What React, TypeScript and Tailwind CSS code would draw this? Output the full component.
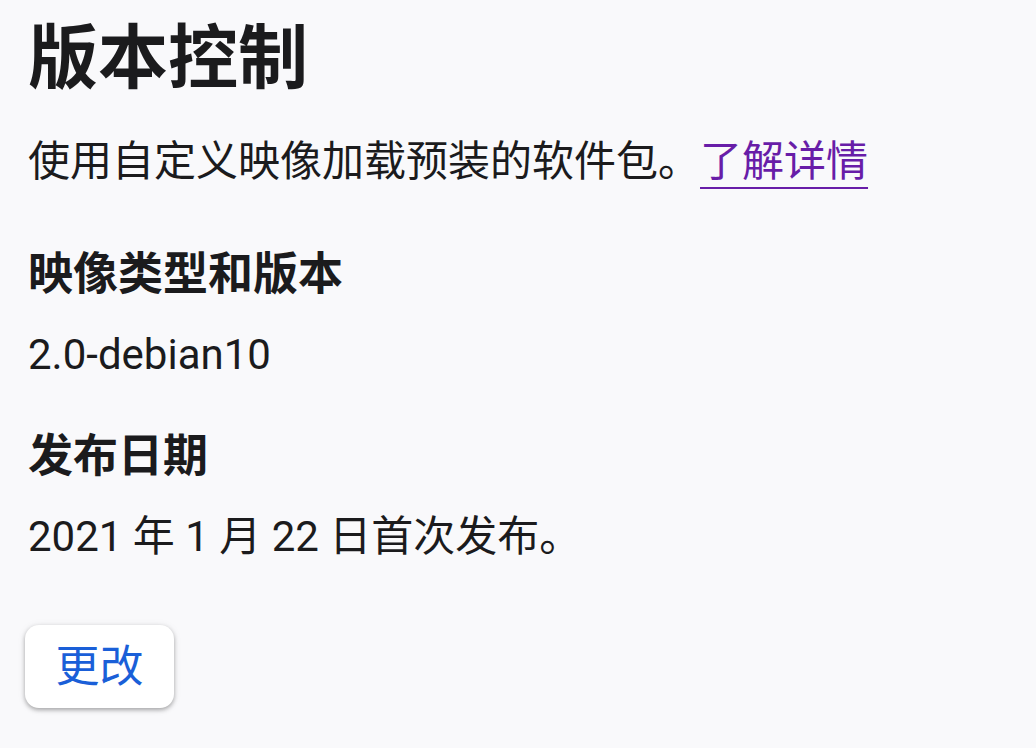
const font = { fontFamily: '"Roboto", "Noto Sans CJK SC", sans-serif' };

export default function App() {
  return (
    <main
      style={font}
      className="w-[1036px] h-[748px] bg-[#f9f9fb] text-[#1b1b1d] flex flex-col items-start pl-[28px] overflow-hidden"
    >
      <h1 className="pt-[19px] text-[70px] leading-[80px] font-semibold">版本控制</h1>

      <p className="mt-[35px] text-[42px] leading-[56px]">
        使用自定义映像加载预装的软件包。
        <a href="#" className="text-[#681da8] underline decoration-2 underline-offset-[11px]">
          了解详情
        </a>
      </p>

      <h2 className="mt-[57px] text-[45px] leading-[56px] font-semibold">映像类型和版本</h2>
      <p className="mt-[24px] text-[42px] leading-[56px]">2.0-debian10</p>

      <h2 className="mt-[46px] text-[45px] leading-[56px] font-semibold">发布日期</h2>
      <p className="mt-[24px] text-[42px] leading-[56px]">2021 年 1 月 22 日首次发布。</p>

      <button className="mt-[60px] -ml-[3px] w-[149px] h-[83px] rounded-[14px] bg-white text-[#1a5fd8] text-[44px] leading-none shadow-[0_2px_4px_rgba(0,0,0,0.3),0_1px_8px_rgba(0,0,0,0.08)]">
        更改
      </button>
    </main>
  );
}
